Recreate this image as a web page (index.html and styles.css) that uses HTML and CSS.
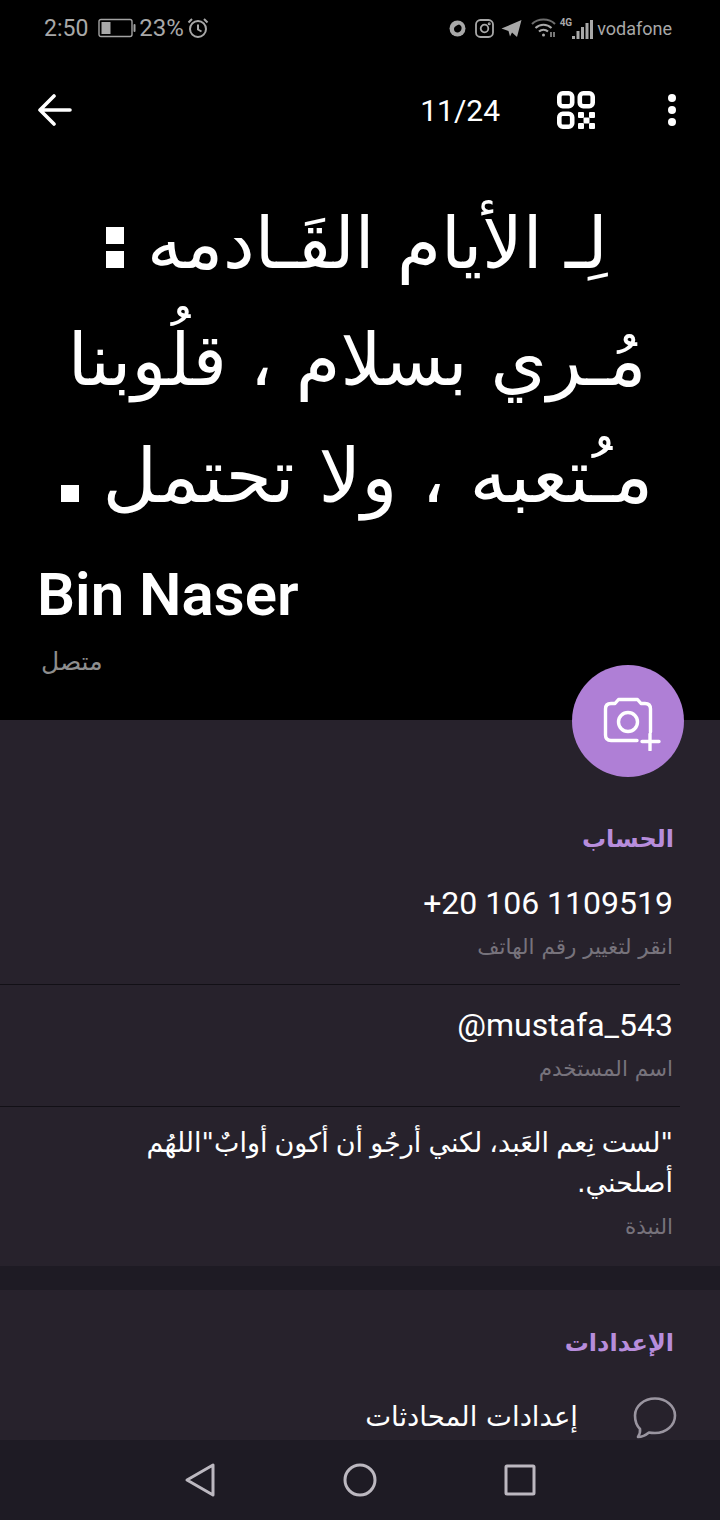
FILE: index.html
```html
<!DOCTYPE html>
<html lang="ar">

<head>
  <meta charset="UTF-8">
  <meta name="viewport" content="width=device-width, initial-scale=1.0">
  <title>Bin Naser</title>
  <link rel="stylesheet" href="styles.css">
</head>

<body>
  <div class="phone">
    <div class="hero">
      <div class="status-bar">
        <div class="status-left">
          <span class="status-time">2:50</span>
          <svg class="battery" width="38" height="20" viewBox="0 0 38 20">
            <rect x="1" y="1.5" width="33" height="17" rx="2" fill="none" stroke="#a3a3a3" stroke-width="1.4"/>
            <rect x="3.5" y="4" width="9" height="12" fill="#a8a8a8"/>
            <rect x="35.5" y="6" width="2" height="8" rx="1" fill="#a3a3a3"/>
          </svg>
          <span class="status-percent">23%</span>
          <svg width="22" height="22" viewBox="0 0 22 22" fill="none" stroke="#a8a8a8" stroke-width="2">
            <circle cx="11" cy="12" r="8"/>
            <path d="M11 7.5V12.5L14.5 14.5"/>
            <path d="M1.5 5.5L5 2M20.500 5.500L17 2"/>
          </svg>
        </div>
        <div class="status-right">
          <svg class="voda" width="17" height="17" viewBox="0 0 17 17">
            <circle cx="8.500" cy="8.500" r="8" fill="#a8a8a8"/>
            <path d="M10 4.500C12 5 13 7 12.500 9C12 11.500 10 12.800 8 12.500C6 12.200 4.800 10.500 5 8.500C5.200 6.500 7.500 5.500 10 4.500Z" fill="#000"/>
          </svg>
          <svg class="status-gap" width="19" height="19" viewBox="0 0 19 19" fill="none" stroke="#a8a8a8" stroke-width="1.800">
            <rect x="1" y="1" width="17" height="17" rx="4.500"/>
            <circle cx="9.500" cy="9.500" r="3.800"/>
            <circle cx="14.200" cy="4.800" r="0.600"/>
          </svg>
          <svg class="status-gap tight" width="21" height="19" viewBox="0 0 21 19">
            <path d="M0.500 9.500L20.500 1L16 18L11 13.500L9 17.500L7.500 12Z" fill="#a8a8a8"/>
          </svg>
          <svg class="status-gap" width="26" height="22" viewBox="0 0 26 22" fill="none" stroke="#a8a8a8" stroke-width="2">
            <path d="M1 7C7 1 18 1 24 7" stroke="#6d6d6d"/>
            <path d="M4.500 11C9 6.500 16 6.500 20.500 11"/>
            <path d="M8 14.500C10.500 12 14.500 12 17 14.500"/>
            <circle cx="12.500" cy="18" r="1.500" fill="#a8a8a8" stroke="none"/>
            <path d="M20 20V15M23 15V20" stroke-width="1.400"/>
          </svg>
          <div class="signal">
            <span class="signal-label">4G</span>
            <svg width="21" height="21" viewBox="0 0 21 21" fill="#a8a8a8">
              <rect x="0" y="17" width="3" height="3"/>
              <rect x="4.500" y="12" width="3" height="8"/>
              <rect x="9" y="8" width="3" height="12"/>
              <rect x="13.500" y="4" width="3" height="16"/>
              <rect x="18" y="1" width="3" height="19"/>
            </svg>
          </div>
          <span class="status-carrier">vodafone</span>
        </div>
      </div>

      <div class="toolbar">
        <svg width="36" height="32" viewBox="0 0 36 32" fill="none" stroke="#fff" stroke-width="3.600" stroke-linecap="round" stroke-linejoin="round">
          <path d="M3 16H33M17 2L3 16L17 30"/>
        </svg>
        <div class="toolbar-right">
          <span class="photo-count">11/24</span>
          <svg class="qr" width="38" height="38" viewBox="0 0 38 38">
            <g fill="none" stroke="#fff" stroke-width="4.600">
              <rect x="2.300" y="2.300" width="12.900" height="12.900" rx="3.500"/>
              <rect x="22.800" y="2.300" width="12.900" height="12.900" rx="3.500"/>
              <rect x="2.300" y="22.800" width="12.900" height="12.900" rx="3.500"/>
            </g>
            <g fill="#fff">
              <rect x="21" y="21" width="6" height="6" rx="1"/>
              <rect x="32" y="21" width="6" height="6" rx="1"/>
              <rect x="26.500" y="26.500" width="6" height="6" rx="1"/>
              <rect x="21" y="32" width="6" height="6" rx="1"/>
              <rect x="32" y="32" width="6" height="6" rx="1"/>
            </g>
          </svg>
          <svg class="dots" width="10" height="34" viewBox="0 0 10 34" fill="#fff">
            <circle cx="5" cy="5" r="4"/>
            <circle cx="5" cy="17" r="4"/>
            <circle cx="5" cy="29" r="4"/>
          </svg>
        </div>
      </div>

      <div class="poster" dir="rtl">
        <div class="poster-line line-one">لِـ الأيام القَـادمه <span class="poster-mark colon"></span></div>
        <div class="poster-line line-two">مُـري بسلام ، قلُوبنا</div>
        <div class="poster-line line-three">مـُتعبه ، ولا تحتمل <span class="poster-mark"></span></div>
      </div>

      <div class="profile">
        <div class="profile-name">Bin Naser</div>
        <div class="profile-status">متصل</div>
      </div>
    </div>

    <div class="fab">
      <svg width="66" height="60" viewBox="0 0 66 60" fill="none" stroke="#fff" stroke-width="3.400" stroke-linecap="round" stroke-linejoin="round">
        <path d="M42 49.500H16Q10.500 49.500 10.500 44V18Q10.500 12.500 16 12.500H20L23.500 8.500H42.500L46 12.500H50Q55.500 12.500 55.500 18V41"/>
        <circle cx="33" cy="31" r="9.500"/>
        <path d="M55 43V59M47 50.500H64"/>
      </svg>
    </div>

    <div class="section first" dir="rtl">
      <div class="section-title">الحساب</div>
      <div class="info-row top">
        <div class="info-value" dir="ltr">+20 106 1109519</div>
        <div class="info-label">انقر لتغيير رقم الهاتف</div>
      </div>
      <div class="info-row">
        <div class="info-value" dir="ltr">@mustafa_543</div>
        <div class="info-label">اسم المستخدم</div>
      </div>
      <div class="info-row last">
        <div class="info-value bio">"لست نِعم العَبد، لكني أرجُو أن أكون أوابٌ"اللهُم أصلحني.</div>
        <div class="info-label">النبذة</div>
      </div>
    </div>

    <div class="section second" dir="rtl">
      <div class="section-title">الإعدادات</div>
      <div class="settings-row">
        <svg width="44" height="42" viewBox="0 0 44 42" fill="none" stroke="#9a95a0" stroke-width="2.600" stroke-linejoin="round">
          <path d="M22 1.500C33 1.500 42 9 42 18.500C42 28.500 33 36 22 36C20 36 18 36 16 35.500C13 38 9 40 5 40C6.500 37.500 7.500 35 7 32C3.500 28.500 2 24 2 18.500C2 9 11 1.500 22 1.500Z"/>
        </svg>
        <span class="settings-text">إعدادات المحادثات</span>
      </div>
    </div>

    <div class="nav-bar">
      <svg width="32" height="36" viewBox="0 0 32 36" fill="none" stroke="#bcb8c0" stroke-width="3" stroke-linejoin="round">
        <path d="M29 3V33L3 18Z"/>
      </svg>
      <svg width="34" height="34" viewBox="0 0 34 34" fill="none" stroke="#bcb8c0" stroke-width="3">
        <circle cx="17" cy="17" r="15"/>
      </svg>
      <svg width="32" height="32" viewBox="0 0 32 32" fill="none" stroke="#bcb8c0" stroke-width="3" stroke-linejoin="round">
        <rect x="2" y="2" width="28" height="28" rx="1"/>
      </svg>
    </div>
  </div>
</body>

</html>
```

FILE: styles.css
```css
* {
  box-sizing: border-box;
}

body {
  margin: 0;
  background: #1e1b24;
  font-family: "Roboto", "DejaVu Sans", sans-serif;
}

.phone {
  position: relative;
  width: 720px;
  height: 1520px;
  overflow: hidden;
  background: #1e1b24;
}

.hero {
  height: 720px;
  background: #000;
  display: flex;
  flex-direction: column;
}

.status-bar {
  height: 56px;
  padding: 0 48px 0 44px;
  display: flex;
  align-items: center;
  justify-content: space-between;
  color: #a8a8a8;
}

.status-left,
.status-right {
  display: flex;
  align-items: center;
}

.status-time {
  font-size: 23px;
  margin-right: 10px;
}

.status-percent {
  font-size: 24px;
  margin: 0 3px 0 3px;
}

.status-gap {
  margin-left: 9px;
}

.status-gap.tight {
  margin-left: 7px;
}

.signal {
  display: flex;
  align-items: flex-end;
  margin-left: 3px;
}

.signal-label {
  font-size: 10px;
  font-weight: bold;
  margin-bottom: 12px;
}

.status-carrier {
  font-size: 18px;
  margin-left: 4px;
}

.toolbar {
  height: 108px;
  padding: 0 43px 0 37px;
  display: flex;
  align-items: center;
  justify-content: space-between;
}

.toolbar-right {
  display: flex;
  align-items: center;
}

.photo-count {
  color: #fff;
  font-size: 30px;
}

.qr {
  margin-left: 57px;
}

.dots {
  margin-left: 72px;
}

.poster {
  height: 348px;
  margin-top: 22px;
  padding-right: 6px;
  color: #fff;
  font-family: "DejaVu Sans", sans-serif;
  text-align: center;
}

.poster-line {
  height: 116px;
  line-height: 116px;
  white-space: nowrap;
}

.line-one {
  font-size: 71px;
}

.line-two {
  font-size: 72px;
}

.line-three {
  font-size: 75px;
}

.poster-mark {
  display: inline-block;
  width: 18px;
  height: 17px;
  background: #fff;
}

.poster-mark.colon {
  box-shadow: 0 -24px 0 #fff;
}

.profile {
  padding: 28px 0 0 37px;
}

.profile-name {
  color: #fff;
  font-size: 60px;
  font-weight: 600;
  line-height: 66px;
}

.profile-status {
  color: #8e8e8e;
  font-family: "DejaVu Sans", sans-serif;
  font-size: 25px;
  line-height: 34px;
  margin: 17px 0 0 4px;
}

.fab {
  position: absolute;
  left: 572px;
  top: 665px;
  width: 112px;
  height: 112px;
  border-radius: 50%;
  background: #af7fd6;
  display: flex;
  align-items: center;
  justify-content: center;
}

.section {
  background: #27222c;
  margin-bottom: 24px;
  padding-top: 36px;
}

.section.first {
  height: 546px;
  padding-top: 102px;
}

.section.second {
  height: 230px;
  margin-bottom: 0;
}

.section-title {
  color: #b78ddc;
  font-family: "DejaVu Sans", sans-serif;
  font-size: 24px;
  font-weight: bold;
  line-height: 34px;
  padding: 0 46px;
}

.info-row {
  width: 680px;
  height: 122px;
  margin-right: 40px;
  padding: 0 7px 0 47px;
  border-bottom: 1px solid #121016;
}

.info-row.top {
  margin-top: 7px;
}

.info-row.last {
  height: auto;
  border-bottom: none;
}

.info-value {
  color: #fff;
  font-size: 32px;
  line-height: 44px;
  padding-top: 18px;
  box-sizing: content-box;
  text-align: right;
}

.info-value.bio {
  font-family: "DejaVu Sans", sans-serif;
  font-size: 27px;
  line-height: 40px;
  padding-top: 16px;
  word-spacing: -1.5px;
}

.info-label {
  color: #77737c;
  font-family: "DejaVu Sans", sans-serif;
  font-size: 21.5px;
  line-height: 34px;
  margin-top: 5px;
}

.last .info-label {
  margin-top: 7px;
}

.settings-row {
  display: flex;
  align-items: center;
  padding: 0 43px;
  margin-top: 37px;
}

.settings-text {
  color: #fff;
  font-family: "DejaVu Sans", sans-serif;
  font-size: 27.5px;
  margin: 0 55px 5px 0;
}

.nav-bar {
  position: absolute;
  left: 0;
  bottom: 0;
  width: 100%;
  height: 80px;
  background: #1e1b24;
  display: flex;
  align-items: center;
  justify-content: space-between;
  padding: 0 184px;
}
```
